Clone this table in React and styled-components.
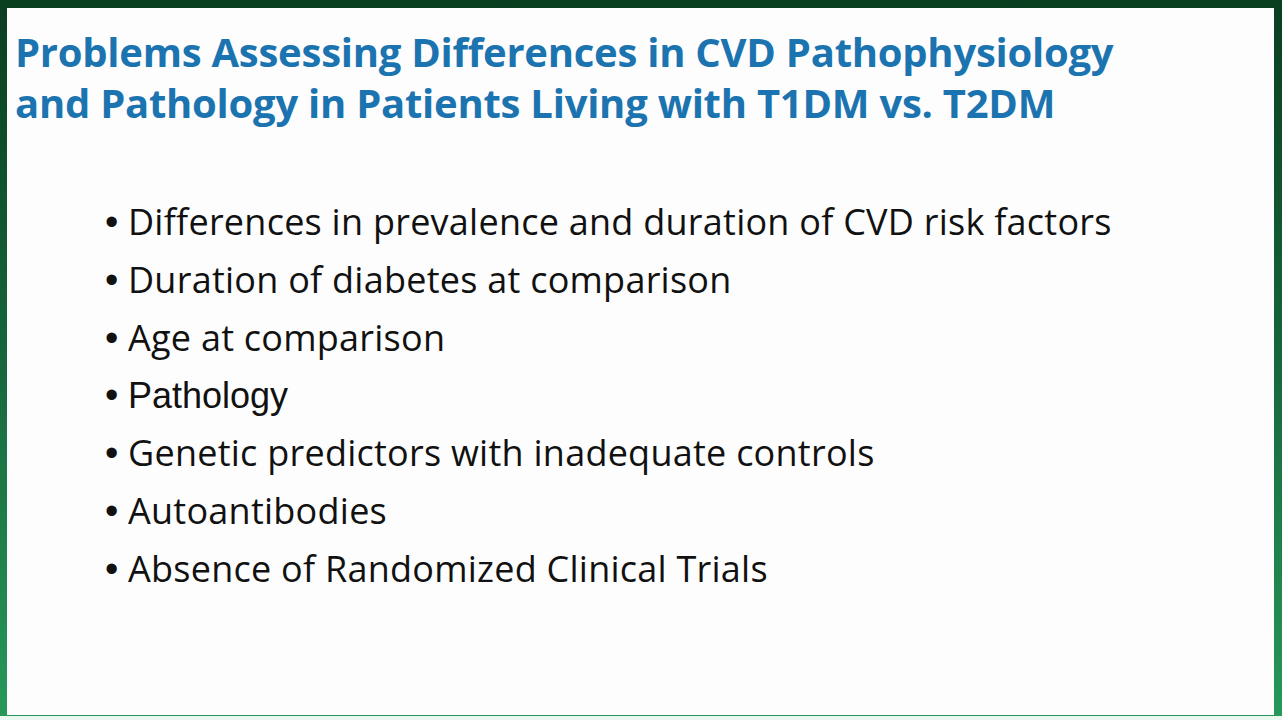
import React from "react";
import styled, { createGlobalStyle } from "styled-components";

const GlobalStyle = createGlobalStyle`
  html, body {
    margin: 0;
    padding: 0;
    height: 100%;
  }
  body {
    background: #fdfdfd;
    overflow: hidden;
  }
`;

const Page = styled.div`
  width: 1282px;
  height: 720px;
  display: flex;
  flex-direction: column;
`;

const Frame = styled.div`
  height: 716px;
  box-sizing: border-box;
  padding: 8px 8px 1px 7px;
  display: flex;
  background: linear-gradient(180deg, #0a3e20 0%, #156238 45%, #27985a 100%);
`;

const Strip = styled.div`
  flex: 1;
  background: #ebf8f0;
`;

const Slide = styled.div`
  flex: 1;
  background: #fdfdfd;
  display: flex;
  flex-direction: column;
`;

const Title = styled.h1`
  margin: 0;
  padding: 18px 0 0 8px;
  font-family: "Open Sans", "Liberation Sans", sans-serif;
  font-weight: 700;
  font-size: 40px;
  line-height: 51px;
  letter-spacing: -0.25px;
  color: #1b74b0;
`;

const List = styled.ul`
  list-style: none;
  margin: 0;
  padding: 72px 0 0 98px;
  display: flex;
  flex-direction: column;
`;

const Item = styled.li`
  display: flex;
  align-items: baseline;
  height: 57.8px;
  line-height: 44px;
  font-family: ${p => (p.$arial ? `"Liberation Sans", Arial, sans-serif` : `"Open Sans", "Liberation Sans", sans-serif`)};
  font-size: 36px;
  color: #111;
  letter-spacing: ${p => (p.$arial ? "0" : "0.25px")};

  &::before {
    content: "•";
    font-family: "Liberation Sans", Arial, sans-serif;
    font-size: 38px;
    width: 23px;
    flex-shrink: 0;
  }
`;

const items = [
  { text: "Differences in prevalence and duration of CVD risk factors" },
  { text: "Duration of diabetes at comparison" },
  { text: "Age at comparison" },
  { text: "Pathology", arial: true },
  { text: "Genetic predictors with inadequate controls" },
  { text: "Autoantibodies" },
  { text: "Absence of Randomized Clinical Trials" },
];

export default function App() {
  return (
    <>
      <GlobalStyle />
      <Page>
        <Frame>
          <Slide>
            <Title>
              Problems Assessing Differences in CVD Pathophysiology
              <br />
              and Pathology in Patients Living with T1DM vs. T2DM
            </Title>
            <List>
              {items.map(item => (
                <Item key={item.text} $arial={item.arial}>
                  {item.text}
                </Item>
              ))}
            </List>
          </Slide>
        </Frame>
        <Strip />
      </Page>
    </>
  );
}
